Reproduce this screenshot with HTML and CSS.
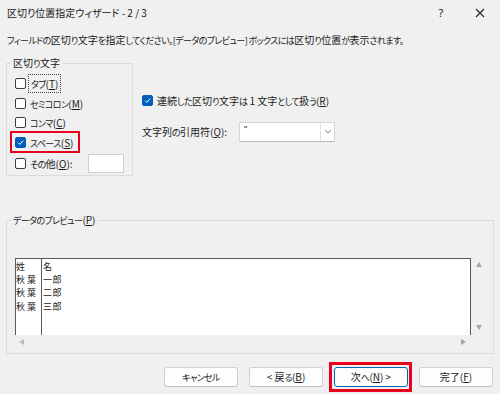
FILE: index.html
```html
<!DOCTYPE html>
<html lang="ja">
<head>
<meta charset="utf-8">
<link rel="stylesheet" href="styles.css">
</head>
<body>
<div class="dialog">
  <div class="titlebar">
    <span class="title">区切り位置指定ウィザード - 2 / 3</span>
    <span class="help">?</span>
    <span class="close"><svg width="10" height="10" viewBox="0 0 10 10"><path d="M1 1L9 9M9 1L1 9" stroke="#222" stroke-width="1.1" fill="none"/></svg></span>
  </div>
  <p class="instr"><span class="k">フィールドの</span>区切<span class="k">り</span>文字<span class="k">を</span>指定<span class="k">してください。[データのプレビュー] ボックスには</span>区切<span class="k">り</span>位置<span class="k">が</span>表示<span class="k">されます。</span></p>
  <div class="top">
    <fieldset class="delims">
      <legend>区切<span class="k">り</span>文字</legend>
      <label class="cb"><span class="box"></span><span class="focus"><span class="k">タブ</span>(<u>T</u>)</span></label>
      <label class="cb"><span class="box"></span><span><span class="k">セミコロン</span>(<u>M</u>)</span></label>
      <label class="cb"><span class="box"></span><span><span class="k">コンマ</span>(<u>C</u>)</span></label>
      <label class="cb hl"><span class="box on"><svg width="9" height="9" viewBox="0 0 9 9"><path d="M2 4.6L3.8 6.4L7.2 2.6" stroke="#fff" stroke-width="1" fill="none"/></svg></span><span><span class="k">スペース</span>(<u>S</u>)</span></label>
      <label class="cb other"><span class="box"></span><span><span class="k">その</span>他(<u>O</u>):</span><span class="textbox"></span></label>
    </fieldset>
    <div class="options">
      <label class="cb"><span class="box on"><svg width="9" height="9" viewBox="0 0 9 9"><path d="M2 4.6L3.8 6.4L7.2 2.6" stroke="#fff" stroke-width="1" fill="none"/></svg></span><span>連続<span class="k">した</span>区切<span class="k">り</span>文字<span class="k">は</span> 1 文字<span class="k">として</span>扱<span class="k">う</span>(<u>R</u>)</span></label>
      <div class="quote">
        <span>文字列<span class="k">の</span>引用符(<u>Q</u>):</span>
        <div class="combo"><span class="val">"</span><span class="drop"><svg width="8" height="5" viewBox="0 0 8 5"><path d="M1 1L4 4L7 1" stroke="#888" stroke-width="1" fill="none"/></svg></span></div>
      </div>
    </div>
  </div>
  <fieldset class="preview">
    <legend><span class="k">データのプレビュー</span>(<u>P</u>)</legend>
    <div class="pv">
      <div class="content">
        <div class="col c1">姓<br>秋葉<br>秋葉<br>秋葉</div>
        <div class="col c2">名<br>一郎<br>二郎<br>三郎</div>
      </div>
      <div class="vscroll"><span class="tri up"></span><span class="tri down"></span></div>
      <div class="hscroll"><span class="tri left"></span><span class="tri right"></span></div>
    </div>
  </fieldset>
  <div class="buttons">
    <button class="btn"><span class="k">キャンセル</span></button>
    <button class="btn">&lt; 戻<span class="k">る</span>(<u>B</u>)</button>
    <button class="btn def">次<span class="k">へ</span>(<u>N</u>) &gt;</button>
    <button class="btn">完了(<u>F</u>)</button>
  </div>
</div>
</body>
</html>
```

FILE: styles.css
```css
* { box-sizing: border-box; }
html, body { margin: 0; padding: 0; }
body {
  width: 500px;
  height: 394px;
  background: #f0f0f0;
  font-family: "Noto Sans CJK JP", "Noto Sans", sans-serif;
  font-size: 10px;
  font-feature-settings: "palt";
  color: #1a1a1a;
  overflow: hidden;
}
u { text-decoration: underline; text-underline-offset: 1px; }
.k { font-size: 9px; letter-spacing: -0.6px; }
.dialog { width: 500px; height: 394px; }

.titlebar {
  height: 25px;
  display: flex;
  align-items: center;
  padding-left: 7px;
  line-height: 14px;
}
.title { flex: 1; }
.help { width: 10px; text-align: center; margin-right: 29px; font-family: "Noto Sans", sans-serif; font-size: 11px; }
.close { width: 10px; height: 10px; display: flex; margin-right: 15px; }

.instr {
  margin: 8px 0 0 7px;
  line-height: 14px;
  white-space: nowrap;
}

.top {
  display: flex;
  margin-top: 8px;
  padding-left: 6px;
  height: 120px;
}
fieldset {
  margin: 0;
  padding: 0;
  border: 1px solid #dcdcdc;
  min-width: 0;
}
legend {
  padding: 0 2px;
  margin-left: -4px;
  line-height: 14px;
}
.delims {
  width: 127px;
  height: 120px;
  padding: 3px 0 0 8px;
}
.cb {
  display: flex;
  align-items: center;
  height: 19.5px;
  gap: 4px;
  white-space: nowrap;
}
.box {
  width: 11px;
  height: 11px;
  border: 1px solid #3b3b3b;
  border-radius: 2px;
  background: #fff;
  display: flex;
  align-items: center;
  justify-content: center;
  flex: none;
}
.box.on { background: #005fb8; border-color: #005fb8; }
.focus { outline: 1px dotted #444; outline-offset: 1px; padding: 0 1px; }
.hl { width: 60px; outline: 2.5px solid #e8001c; outline-offset: 3.5px; height: 12px; margin: 3.75px 0; }
.other { height: 22px; }
.other .textbox {
  width: 36px;
  height: 19px;
  background: #fff;
  border: 1px solid #cfcfcf;
  margin-left: 11px;
}

.options {
  padding: 35px 0 0 9px;
  display: flex;
  flex-direction: column;
}
.quote {
  display: flex;
  align-items: center;
  gap: 12px;
  margin-top: 11px;
}
.combo {
  width: 96px;
  height: 20px;
  background: #fff;
  border: 1px solid #d6d6d6;
  border-bottom-color: #b8b8b8;
  display: flex;
}
.val { flex: 1; padding: 1px 0 0 4px; font-family: "Liberation Sans", sans-serif; font-size: 9px; line-height: 10px; }
.drop {
  width: 14px;
  border-left: 1px solid #e0e0e0;
  display: flex;
  align-items: center;
  justify-content: center;
}

.preview {
  margin: 37px 0 0 6px;
  width: 488px;
  height: 141px;
  padding: 30px 0 0 8px;
}
.pv {
  display: grid;
  grid-template-columns: 456px 15px;
  grid-template-rows: 77px 13px;
}
.content {
  background: #fff;
  border-top: 1.5px solid #5a5a5a;
  border-left: 1.5px solid #5a5a5a;
  border-right: 1.5px solid #5a5a5a;
  display: flex;
  font-family: "Noto Sans CJK JP", sans-serif;
  font-feature-settings: normal;
  font-size: 9px;
  line-height: 13.2px;
  color: #222;
}
.col { letter-spacing: 2px; padding-top: 1px; }
.c1 { width: 26px; border-right: 1.5px solid #5a5a5a; }
.c2 { padding-left: 1px; letter-spacing: 0.5px; }
.vscroll {
  display: flex;
  flex-direction: column;
  justify-content: space-between;
  align-items: center;
  padding: 4px 0 5px;
}
.hscroll {
  display: flex;
  justify-content: space-between;
  align-items: center;
  padding: 0 5px 0 4px;
}
.tri { width: 0; height: 0; border: 3.5px solid transparent; }
.tri.up { border-bottom: 5px solid #a6a6a6; border-top-width: 0; }
.tri.down { border-top: 5px solid #a6a6a6; border-bottom-width: 0; }
.tri.left { border-right: 5px solid #bdbdbd; border-left-width: 0; }
.tri.right { border-left: 5px solid #a6a6a6; border-right-width: 0; }

.buttons {
  display: flex;
  justify-content: flex-end;
  gap: 11px;
  padding-right: 7px;
  margin-top: 13px;
}
.btn {
  width: 74px;
  height: 20px;
  background: #fdfdfd;
  border: 1px solid #d0d0d0;
  border-bottom-color: #c0c0c0;
  border-radius: 3px;
  font: inherit;
  font-size: 10px;
  color: #1a1a1a;
  padding: 0;
  line-height: 18px;
}
.btn.def { border-color: #0067c0; position: relative; }
.btn.def::after {
  content: "";
  position: absolute;
  inset: -6px -5px -6px -6px;
  border: 3px solid #e8001c;
}
```
